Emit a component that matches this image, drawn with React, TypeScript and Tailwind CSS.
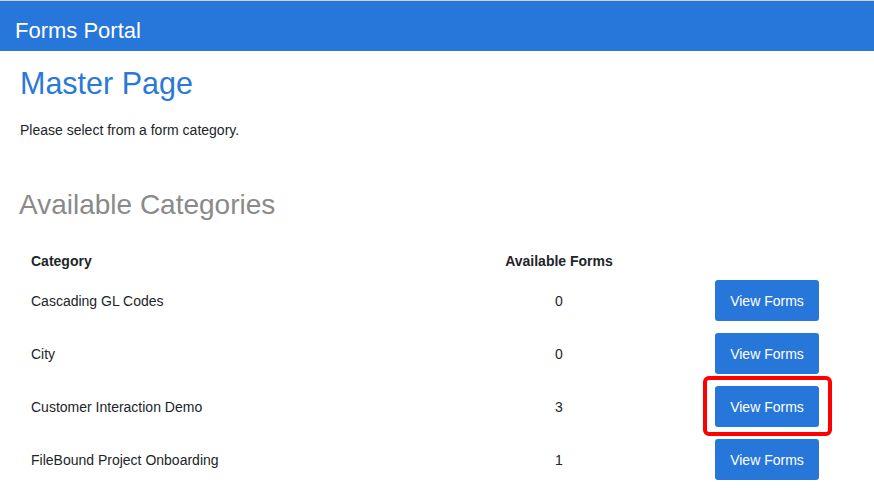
import React from "react";

const rows = [
  { name: "Cascading GL Codes", count: 0 },
  { name: "City", count: 0 },
  { name: "Customer Interaction Demo", count: 3, highlight: true },
  { name: "FileBound Project Onboarding", count: 1 },
];

export default function App() {
  return (
    <div
      className="w-[874px] h-[488px] overflow-hidden bg-white text-[#212529]"
      style={{ fontFamily: '"Liberation Sans", Arial, sans-serif' }}
    >
      <div className="h-[1px] bg-[#d0d0d0]" />
      <header className="h-[50px] bg-[#2776da] pl-[15px] pt-[17px]">
        <div className="text-[22px] leading-[26px] text-white">Forms Portal</div>
      </header>
      <main className="pl-[19px]">
        <h1 className="mt-[14px] pl-[1px] text-[30.5px] leading-[36px] text-[#2a78d7]">Master Page</h1>
        <p className="mt-[19px] pl-[1px] text-[14px] leading-[20px]">Please select from a form category.</p>
        <h2 className="mt-[49px] text-[28px] leading-[32px] text-[#8a8a8a]">Available Categories</h2>
        <div className="mt-[26px] grid grid-cols-[420px_240px_176px]">
          <div className="h-[27px] flex items-center pl-[12px] pt-[1px] text-[14px] font-bold">Category</div>
          <div className="h-[27px] flex items-center justify-center pt-[1px] text-[14px] font-bold">Available Forms</div>
          <div className="h-[27px]" />
          {rows.map((r) => (
            <React.Fragment key={r.name}>
              <div className="h-[53px] flex items-center pl-[12px] pt-[2px] text-[14px]">{r.name}</div>
              <div className="h-[53px] flex items-center justify-center pt-[2px] text-[14px]">{r.count}</div>
              <div className="h-[53px] flex items-center justify-center">
                <div className="relative">
                  <button className="w-[104px] h-[41px] rounded-[3px] bg-[#2776da] text-white text-[14px] pt-[1px]">
                    View Forms
                  </button>
                  {r.highlight && (
                    <div className="absolute left-[-12px] top-[-10px] w-[129px] h-[60px] border-4 border-[#ff0000] rounded-[6px]" />
                  )}
                </div>
              </div>
            </React.Fragment>
          ))}
        </div>
      </main>
    </div>
  );
}
